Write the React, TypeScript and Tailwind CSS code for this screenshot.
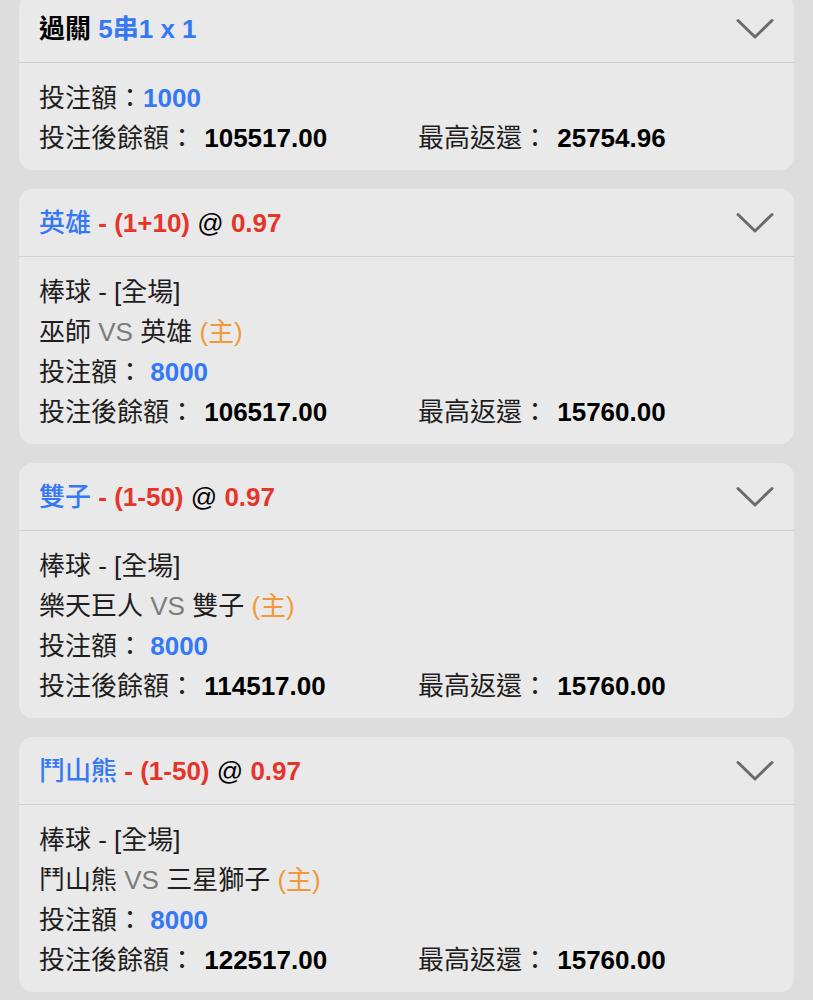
import React from 'react';

type Bet = {
  team: string;
  handicap: string;
  match?: [string, string];
  stake: string;
  balance: string;
  maxReturn: string;
};

const BETS: Bet[] = [
  { team: '英雄', handicap: '(1+10)', match: ['巫師', '英雄'], stake: '8000', balance: '106517.00', maxReturn: '15760.00' },
  { team: '雙子', handicap: '(1-50)', match: ['樂天巨人', '雙子'], stake: '8000', balance: '114517.00', maxReturn: '15760.00' },
  { team: '鬥山熊', handicap: '(1-50)', match: ['鬥山熊', '三星獅子'], stake: '8000', balance: '122517.00', maxReturn: '15760.00' },
];

function Chevron() {
  return (
    <svg width="38" height="22" viewBox="0 0 38 22" fill="none" className="shrink-0">
      <polyline points="2,2.5 19,19 36,2.5" stroke="#6b6b6b" strokeWidth="3" strokeLinecap="round" strokeLinejoin="round" />
    </svg>
  );
}

function Card({ title, children }: { title: React.ReactNode; children: React.ReactNode }) {
  return (
    <div className="overflow-hidden rounded-[14px] bg-[#e9e9e9]">
      <div className="flex h-[68px] items-center justify-between border-b border-[#d2d2d2] px-5">
        <div className="text-[26px] leading-[40px]">{title}</div>
        <Chevron />
      </div>
      <div className="px-5 pb-[12px] pt-[15px] text-[26px] leading-[40px] text-[#1e1e1e]">{children}</div>
    </div>
  );
}

function Totals({ balance, maxReturn }: { balance: string; maxReturn: string }) {
  return (
    <div className="grid grid-cols-[379px_1fr]">
      <div>
        投注後餘額： <span className="ml-[2px] font-bold text-black">{balance}</span>
      </div>
      <div>
        最高返還： <span className="ml-[2px] font-bold text-black">{maxReturn}</span>
      </div>
    </div>
  );
}

export default function App() {
  return (
    <div className="h-[1000px] overflow-hidden bg-[#dddddd] px-[19px] font-['Liberation_Sans','Noto_Sans_CJK_TC',sans-serif]">
      <div className="-mt-[5px] flex flex-col gap-[19px]">
        {/* Parlay summary */}
        <Card
          title={
            <>
              <span className="font-bold text-black">過關</span>{' '}
              <span className="font-bold text-[#3478f6]">5串1 x 1</span>
            </>
          }
        >
          <div>
            投注額：<span className="font-bold text-[#3478f6]">1000</span>
          </div>
          <Totals balance="105517.00" maxReturn="25754.96" />
        </Card>

        {BETS.map((bet) => (
          <Card
            key={bet.team}
            title={
              <>
                <span className="font-medium text-[#3478f6]">{bet.team}</span>{' '}
                <span className="font-bold text-[#e5352b]">- {bet.handicap}</span>{' '}
                <span className="font-medium text-black">@</span>{' '}
                <span className="font-bold text-[#e5352b]">0.97</span>
              </>
            }
          >
            <div>棒球 - [全場]</div>
            {bet.match && (
              <div>
                {bet.match[0]} <span className="text-[#7c7c7c]">VS</span> {bet.match[1]}{' '}
                <span className="text-[#f29838]">(主)</span>
              </div>
            )}
            <div>
              投注額： <span className="font-bold text-[#3478f6]">{bet.stake}</span>
            </div>
            <Totals balance={bet.balance} maxReturn={bet.maxReturn} />
          </Card>
        ))}
      </div>
    </div>
  );
}
